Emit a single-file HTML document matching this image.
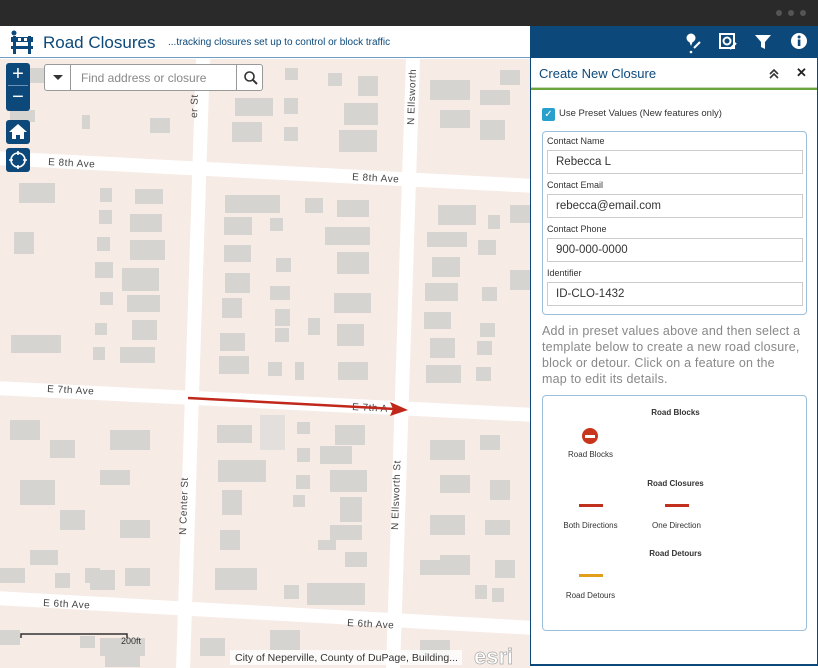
<!DOCTYPE html>
<html><head><meta charset="utf-8"><style>
*{box-sizing:border-box;margin:0;padding:0}
body{width:818px;height:668px;overflow:hidden;background:#fff;font-family:"Liberation Sans",sans-serif;position:relative}
.abs{position:absolute}
#top{left:0;top:0;width:818px;height:26px;background:#2a2a2a}
.dot{width:6px;height:6px;border-radius:3px;background:#555;top:10px}
#hdr{left:0;top:26px;width:530px;height:32px;background:#fff;border-bottom:1px solid #6f9ec4}
#map{left:0;top:59px;width:530px;height:609px;overflow:hidden}
#rhdr{left:530px;top:26px;width:288px;height:32px;background:#0c497a}
#panel{left:530px;top:58px;width:288px;height:608px;background:#fff;border-left:1px solid #0c497a;border-right:1px solid #0c497a;border-bottom:2px solid #0c497a}
.lbl{font-size:9px;color:#333;position:absolute;left:6px}
.inp{position:absolute;left:6px;width:256px;height:24px;border:1px solid #ccc;font-size:11.5px;color:#333;padding:5px 0 0 8px}
.btn{position:absolute;left:6px;width:24px;background:#0c497a;border-radius:3px;color:#fff;text-align:center}
.tl{position:absolute;font-size:8px;color:#333;text-align:center}
.th{position:absolute;font-size:8px;font-weight:bold;color:#333;text-align:center}
</style></head><body>
<div id="top" class="abs"></div>
<div class="abs dot" style="left:776px"></div><div class="abs dot" style="left:788px"></div><div class="abs dot" style="left:800px"></div>
<div id="hdr" class="abs">
<svg class="abs" style="left:10px;top:4px" width="24" height="24" viewBox="0 0 24 24"><circle cx="4" cy="3" r="2.5" fill="#0c497a"/><rect x="3" y="6" width="3" height="18" fill="#0c497a"/><rect x="18" y="6" width="3" height="18" fill="#0c497a"/><rect x="1" y="7" width="22" height="5" fill="#0c497a"/><rect x="8" y="8" width="3" height="3" fill="#fff"/><rect x="14" y="8" width="3" height="3" fill="#fff"/><rect x="1" y="16" width="22" height="3" fill="#0c497a"/></svg>
<div class="abs" style="left:43px;top:7px;font-size:17px;color:#0c497a">Road Closures</div>
<div class="abs" style="left:168px;top:11px;font-size:10px;color:#0c497a">...tracking closures set up to control or block traffic</div>
</div>
<div id="map" class="abs">
<svg width="530" height="609" viewBox="0 59 530 609" style="display:block">
<rect x="0" y="59" width="530" height="609" fill="#f6ebe5"/>
<g stroke="#fff" stroke-width="14" fill="none">
<line x1="-5" y1="158" x2="535" y2="186"/><line x1="-5" y1="388" x2="535" y2="415"/><line x1="-5" y1="598" x2="535" y2="628"/>
<line x1="203" y1="58" x2="183" y2="670"/><line x1="413" y1="58" x2="393" y2="670"/>
</g>
<g fill="#d6d4d1">
<rect x="285" y="68" width="13" height="12"/><rect x="235" y="98" width="38" height="18"/><rect x="284" y="98" width="14" height="16"/><rect x="232" y="122" width="30" height="20"/><rect x="284" y="127" width="14" height="14"/><rect x="328" y="73" width="14" height="13"/><rect x="358" y="76" width="20" height="20"/><rect x="344" y="103" width="34" height="22"/><rect x="339" y="130" width="38" height="22"/><rect x="28" y="68" width="30" height="15"/><rect x="10" y="110" width="25" height="12"/><rect x="82" y="115" width="8" height="14"/><rect x="150" y="118" width="20" height="15"/><rect x="430" y="80" width="40" height="20"/><rect x="480" y="90" width="30" height="15"/><rect x="440" y="110" width="30" height="18"/><rect x="480" y="120" width="25" height="20"/><rect x="500" y="70" width="20" height="15"/>
<rect x="225" y="195" width="55" height="18"/><rect x="224" y="217" width="28" height="18"/><rect x="224" y="245" width="27" height="17"/><rect x="225" y="273" width="25" height="20"/><rect x="222" y="298" width="20" height="20"/><rect x="220" y="333" width="25" height="18"/><rect x="219" y="356" width="30" height="18"/><rect x="270" y="218" width="13" height="13"/><rect x="276" y="258" width="15" height="14"/><rect x="270" y="286" width="20" height="14"/><rect x="275" y="309" width="15" height="17"/><rect x="275" y="328" width="14" height="14"/><rect x="308" y="318" width="12" height="17"/><rect x="268" y="362" width="14" height="14"/><rect x="295" y="362" width="9" height="18"/><rect x="305" y="198" width="18" height="15"/><rect x="337" y="200" width="32" height="17"/><rect x="325" y="227" width="45" height="18"/><rect x="337" y="252" width="32" height="22"/><rect x="334" y="293" width="37" height="20"/><rect x="337" y="324" width="27" height="22"/><rect x="338" y="362" width="30" height="18"/>
<rect x="19" y="183" width="36" height="20"/><rect x="14" y="232" width="20" height="22"/><rect x="100" y="188" width="12" height="14"/><rect x="135" y="189" width="28" height="15"/><rect x="99" y="210" width="13" height="14"/><rect x="130" y="214" width="32" height="18"/><rect x="97" y="237" width="13" height="14"/><rect x="130" y="240" width="35" height="20"/><rect x="95" y="262" width="18" height="16"/><rect x="122" y="268" width="37" height="23"/><rect x="100" y="292" width="13" height="13"/><rect x="127" y="295" width="33" height="17"/><rect x="95" y="323" width="12" height="12"/><rect x="132" y="320" width="25" height="20"/><rect x="93" y="347" width="12" height="13"/><rect x="120" y="347" width="35" height="16"/><rect x="11" y="335" width="50" height="18"/>
<rect x="438" y="205" width="38" height="20"/><rect x="488" y="215" width="12" height="14"/><rect x="427" y="232" width="40" height="15"/><rect x="478" y="240" width="18" height="15"/><rect x="432" y="257" width="28" height="20"/><rect x="425" y="283" width="33" height="18"/><rect x="482" y="287" width="15" height="14"/><rect x="424" y="312" width="27" height="17"/><rect x="480" y="323" width="15" height="14"/><rect x="430" y="338" width="25" height="20"/><rect x="477" y="341" width="15" height="14"/><rect x="426" y="365" width="35" height="18"/><rect x="476" y="367" width="15" height="14"/><rect x="510" y="270" width="20" height="20"/><rect x="510" y="205" width="20" height="18"/>
<rect x="217" y="425" width="35" height="18"/><rect x="218" y="460" width="48" height="22"/><rect x="222" y="490" width="20" height="25"/><rect x="220" y="530" width="20" height="20"/><rect x="297" y="422" width="13" height="12"/><rect x="297" y="448" width="13" height="14"/><rect x="296" y="475" width="14" height="14"/><rect x="293" y="495" width="12" height="12"/><rect x="335" y="425" width="30" height="20"/><rect x="320" y="446" width="32" height="18"/><rect x="330" y="470" width="37" height="22"/><rect x="340" y="497" width="22" height="25"/><rect x="330" y="525" width="32" height="15"/><rect x="318" y="540" width="18" height="10"/><rect x="345" y="552" width="22" height="15"/><rect x="260" y="415" width="25" height="35" fill="#e2dfdc"/>
<rect x="10" y="420" width="30" height="20"/><rect x="50" y="440" width="25" height="18"/><rect x="110" y="430" width="40" height="20"/><rect x="20" y="480" width="35" height="25"/><rect x="100" y="470" width="30" height="15"/><rect x="60" y="510" width="25" height="20"/><rect x="120" y="520" width="30" height="18"/><rect x="30" y="550" width="28" height="15"/><rect x="90" y="570" width="25" height="20"/>
<rect x="430" y="440" width="35" height="20"/><rect x="480" y="435" width="20" height="15"/><rect x="440" y="475" width="30" height="18"/><rect x="490" y="480" width="20" height="20"/><rect x="430" y="515" width="35" height="20"/><rect x="485" y="520" width="25" height="15"/><rect x="440" y="555" width="30" height="20"/><rect x="495" y="560" width="20" height="18"/>
<rect x="0" y="568" width="25" height="15"/><rect x="55" y="573" width="15" height="15"/><rect x="85" y="568" width="15" height="15"/><rect x="125" y="568" width="25" height="18"/><rect x="215" y="568" width="42" height="22"/><rect x="284" y="585" width="15" height="14"/><rect x="307" y="583" width="58" height="22"/><rect x="420" y="560" width="30" height="15"/><rect x="475" y="585" width="12" height="14"/><rect x="492" y="588" width="12" height="14"/>
<rect x="0" y="630" width="20" height="15"/><rect x="80" y="636" width="15" height="12"/><rect x="100" y="638" width="45" height="18"/><rect x="200" y="638" width="25" height="18"/><rect x="105" y="655" width="35" height="12"/><rect x="270" y="630" width="30" height="20"/><rect x="420" y="640" width="30" height="18"/>
</g>
<g font-family="Liberation Sans,sans-serif" font-size="10" fill="#444" letter-spacing="0.5">
<text x="48" y="165" transform="rotate(3 48 165)">E 8th Ave</text>
<text x="352" y="180" transform="rotate(3 352 180)">E 8th Ave</text>
<text x="47" y="392" transform="rotate(3 47 392)">E 7th Ave</text>
<text x="352" y="410" transform="rotate(3 352 410)">E 7th A</text>
<text x="43" y="606" transform="rotate(3 43 606)">E 6th Ave</text>
<text x="347" y="626" transform="rotate(3 347 626)">E 6th Ave</text>
<text x="186" y="535" transform="rotate(-88 186 535)">N Center St</text>
<text x="398" y="530" transform="rotate(-88 398 530)">N Ellsworth St</text>
<text x="414" y="125" transform="rotate(-88 414 125)">N Ellsworth</text>
<text x="197" y="118" transform="rotate(-88 197 118)">er St</text>
</g>
<line x1="188" y1="398" x2="395" y2="409" stroke="#c0281b" stroke-width="2.5"/>
<polygon points="408,410 390,402 393,409 390,416" fill="#c0281b"/>
<path d="M21 638 V634 H127 V638" stroke="#333" stroke-width="1.5" fill="none"/>
<text x="121" y="644" font-size="9" fill="#333" font-family="Liberation Sans,sans-serif">200ft</text>
<rect x="230" y="650" width="232" height="15" fill="#fff" opacity="0.8"/>
<text x="235" y="661" font-size="10.5" fill="#333" font-family="Liberation Sans,sans-serif">City of Neperville, County of DuPage, Building...</text>
<text x="474" y="664" font-size="22" font-weight="bold" fill="#fff" stroke="#aaa" stroke-width="0.7" font-family="Liberation Sans,sans-serif">esri</text>
</svg>
<div class="abs" style="left:44px;top:5px;width:219px;height:27px;background:#fff;border:1px solid #999;border-radius:3px">
<div class="abs" style="left:0;top:0;width:26px;height:25px;border-right:1px solid #999"></div>
<div class="abs" style="left:8px;top:10px;width:0;height:0;border-left:5px solid transparent;border-right:5px solid transparent;border-top:5px solid #333"></div>
<div class="abs" style="left:36px;top:6px;font-size:12px;color:#888">Find address or closure</div>
<div class="abs" style="left:191px;top:0;width:1px;height:25px;background:#999"></div>
<svg class="abs" style="left:198px;top:5px" width="16" height="16"><circle cx="6.5" cy="6.5" r="4.5" stroke="#333" stroke-width="1.6" fill="none"/><line x1="10" y1="10" x2="14" y2="14" stroke="#333" stroke-width="2"/></svg>
</div>
<div class="btn" style="top:4px;height:48px"><div style="font-size:20px;line-height:22px">+</div><div style="border-top:1px solid #6a92b8;margin:0 2px;font-size:20px;line-height:22px">−</div></div>
<div class="btn" style="top:61px;height:24px"><svg width="24" height="24"><path d="M12 4 L3 12 H6 V19 H10 V15 H14 V19 H18 V12 H21 Z" fill="#fff"/></svg></div>
<div class="btn" style="top:89px;height:24px"><svg width="24" height="24"><circle cx="12" cy="12" r="7" stroke="#fff" stroke-width="1.6" fill="none"/><path d="M12 3V7M12 17V21M3 12H7M17 12H21" stroke="#fff" stroke-width="1.6"/></svg></div>
</div>
<div id="rhdr" class="abs">
<svg class="abs" style="left:154px;top:6px" width="20" height="22"><circle cx="7" cy="6" r="4.5" fill="#fff"/><path d="M5 9 L7 14 L9 9Z" fill="#fff"/><path d="M10 16 L16 10" stroke="#fff" stroke-width="2"/><circle cx="7" cy="20" r="1.3" fill="#fff"/></svg>
<svg class="abs" style="left:188px;top:6px" width="20" height="20"><rect x="2" y="2" width="14" height="14" stroke="#fff" stroke-width="2" fill="none"/><circle cx="9" cy="9" r="3.5" stroke="#fff" stroke-width="2" fill="none"/><path d="M12 17 L18 11" stroke="#fff" stroke-width="2"/></svg>
<svg class="abs" style="left:224px;top:8px" width="18" height="16"><path d="M1 1 H17 L11 8 V15 L7 13 V8 Z" fill="#fff"/></svg>
<svg class="abs" style="left:260px;top:6px" width="18" height="18"><circle cx="9" cy="9" r="8" fill="#fff"/><rect x="7.8" y="7.5" width="2.6" height="6.5" fill="#0c497a"/><circle cx="9.1" cy="5" r="1.5" fill="#0c497a"/></svg>
</div>
<div id="panel" class="abs">
<div class="abs" style="left:8px;top:8px;font-size:13px;color:#0c497a">Create New Closure</div>
<svg class="abs" style="left:237px;top:10px" width="12" height="12"><path d="M2 6 L6 2 L10 6 M2 10 L6 6 L10 10" stroke="#333" stroke-width="1.6" fill="none"/></svg>
<div class="abs" style="left:265px;top:7px;font-size:13px;color:#222;font-weight:bold">✕</div>
<div class="abs" style="left:0;top:29px;width:286px;height:3px;background:#6aa63b;border-top:1px solid #c5d9b3"></div>
<div class="abs" style="left:11px;top:50px;width:13px;height:13px;background:#29a0cc;border-radius:2px;color:#fff;font-size:10px;text-align:center;line-height:13px">✓</div>
<div class="abs" style="left:28px;top:50px;font-size:9.5px;color:#333">Use Preset Values (New features only)</div>
<div class="abs" style="left:11px;top:73px;width:265px;height:184px;border:1px solid #9cc0dc;border-radius:4px">
<div class="lbl" style="top:4px;left:4px">Contact Name</div><div class="inp" style="top:18px;left:4px">Rebecca L</div>
<div class="lbl" style="top:48px;left:4px">Contact Email</div><div class="inp" style="top:62px;left:4px">rebecca@email.com</div>
<div class="lbl" style="top:92px;left:4px">Contact Phone</div><div class="inp" style="top:106px;left:4px">900-000-0000</div>
<div class="lbl" style="top:136px;left:4px">Identifier</div><div class="inp" style="top:150px;left:4px">ID-CLO-1432</div>
</div>
<div class="abs" style="left:11px;top:265px;width:275px;white-space:nowrap;font-size:12.5px;letter-spacing:0.2px;line-height:16px;color:#888">Add in preset values above and then select a<br>template below to create a new road closure,<br>block or detour. Click on a feature on the<br>map to edit its details.</div>
<div class="abs" style="left:11px;top:337px;width:265px;height:236px;border:1px solid #9cc0dc;border-radius:4px">
<div class="th" style="left:0;width:265px;top:12px">Road Blocks</div>
<div class="abs" style="left:39px;top:32px;width:16px;height:16px;border-radius:8px;background:#c8351c"><div style="margin:7px 3px 0;height:3px;background:#fff"></div></div>
<div class="tl" style="left:10px;width:75px;top:54px">Road Blocks</div>
<div class="th" style="left:0;width:265px;top:83px">Road Closures</div>
<div class="abs" style="left:36px;top:108px;width:24px;height:3px;background:#c0301d"></div>
<div class="tl" style="left:10px;width:75px;top:125px">Both Directions</div>
<div class="abs" style="left:122px;top:108px;width:24px;height:3px;background:#c0301d"></div>
<div class="tl" style="left:96px;width:75px;top:125px">One Direction</div>
<div class="th" style="left:0;width:265px;top:153px">Road Detours</div>
<div class="abs" style="left:36px;top:178px;width:24px;height:3px;background:#e0a01c"></div>
<div class="tl" style="left:10px;width:75px;top:195px">Road Detours</div>
</div>
</div>
</body></html>
